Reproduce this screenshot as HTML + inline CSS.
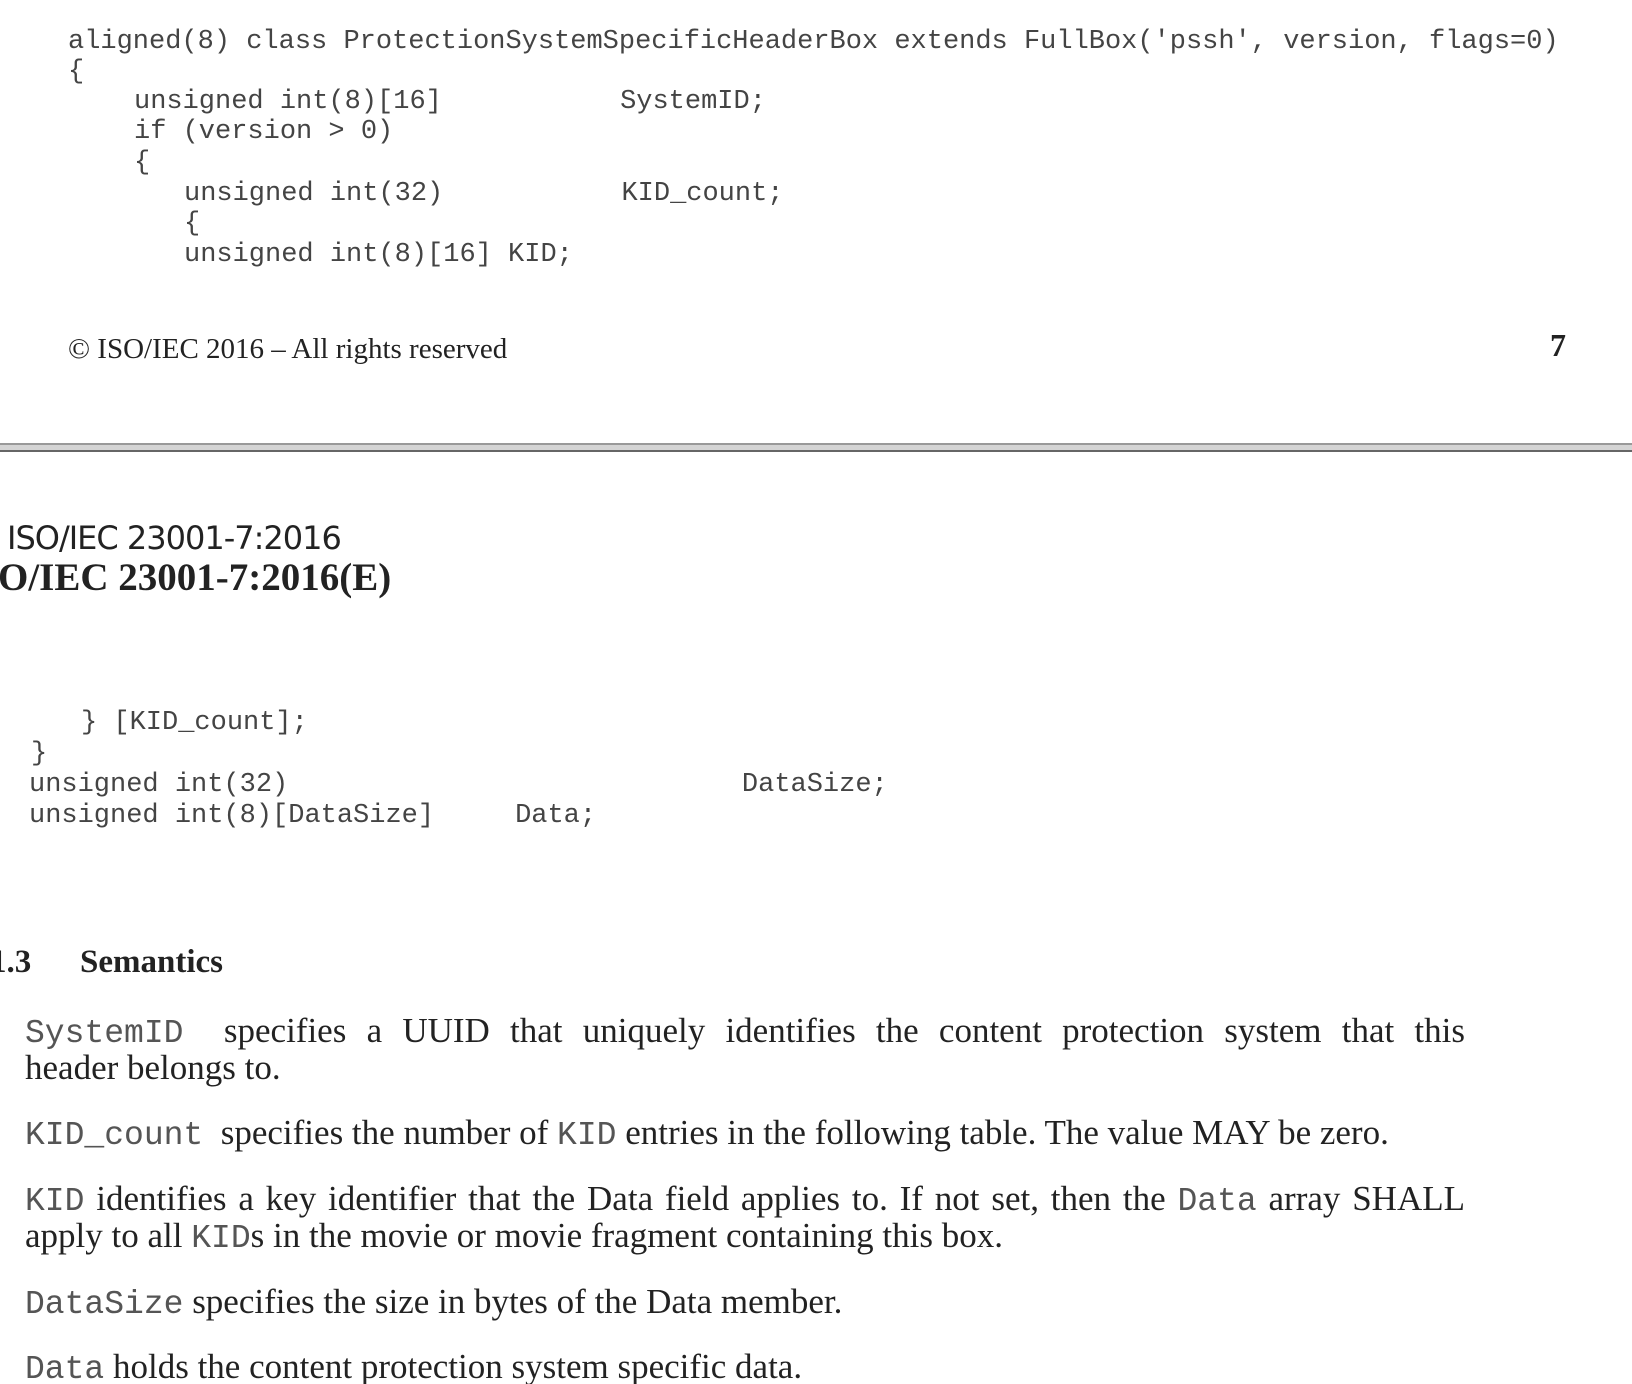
<!DOCTYPE html>
<html><head><meta charset="utf-8"><style>
html,body{margin:0;padding:0;background:#fff;width:1632px;height:1384px;overflow:hidden;position:relative}
.c{position:absolute;font-family:"Liberation Mono",monospace;font-size:27px;color:#444;white-space:pre;line-height:30px}
.s{position:absolute;font-family:"Liberation Serif",serif;font-size:35px;color:#222;white-space:nowrap;line-height:38px}
.m{font-family:"Liberation Mono",monospace;font-size:33px;color:#555}
.j{white-space:normal;text-align:justify;text-align-last:justify;width:1440px}
</style></head><body>
<div class="c" style="left:68px;top:27px">aligned(8) class ProtectionSystemSpecificHeaderBox extends FullBox('pssh', version, flags=0)</div>
<div class="c" style="left:68px;top:57px">{</div>
<div class="c" style="left:134px;top:87px">unsigned int(8)[16]           SystemID;</div>
<div class="c" style="left:134px;top:117px">if (version &gt; 0)</div>
<div class="c" style="left:134px;top:148px">{</div>
<div class="c" style="left:184px;top:179px">unsigned int(32)           KID_count;</div>
<div class="c" style="left:184px;top:209px">{</div>
<div class="c" style="left:184px;top:240px">unsigned int(8)[16] KID;</div>
<div class="s" style="left:68px;top:330px;font-size:29px">© ISO/IEC 2016 – All rights reserved</div>
<div class="s" style="left:1550px;top:326px;font-size:32px;font-weight:bold">7</div>
<div style="position:absolute;left:0;top:443px;width:1632px;height:9px;background:#d4d4d4;border-top:2px solid #999;border-bottom:2px solid #666;box-sizing:border-box"></div>
<div style="position:absolute;left:7px;top:519px;font-family:'DejaVu Sans','Liberation Sans',sans-serif;font-size:32px;color:#222;letter-spacing:-1px">ISO/IEC 23001-7:2016</div>
<div style="position:absolute;left:-2px;top:555px;font-family:'Liberation Serif',serif;font-size:39px;font-weight:bold;color:#222">O/IEC 23001-7:2016(E)</div>
<div class="c" style="left:81px;top:708px">} [KID_count];</div>
<div class="c" style="left:31px;top:739px">}</div>
<div class="c" style="left:29px;top:770px">unsigned int(32)                            DataSize;</div>
<div class="c" style="left:29px;top:801px">unsigned int(8)[DataSize]     Data;</div>
<div class="s" style="left:-10px;top:943px;font-weight:bold;font-size:33px">1.3</div>
<div class="s" style="left:80px;top:943px;font-weight:bold;font-size:33px">Semantics</div>
<div class="s j" style="left:25px;top:1012px;width:1440px"><span class="m">SystemID</span>&nbsp; specifies a UUID that uniquely identifies the content protection system that this</div>
<div class="s" style="left:25px;top:1049px">header belongs to.</div>
<div class="s" style="left:25px;top:1114px"><span class="m">KID_count</span>&nbsp; specifies the number of <span class="m">KID</span> entries in the following table. The value MAY be zero.</div>
<div class="s j" style="left:25px;top:1180px;width:1440px"><span class="m">KID</span> identifies a key identifier that the Data field applies to. If not set, then the <span class="m">Data</span> array SHALL</div>
<div class="s" style="left:25px;top:1217px">apply to all <span class="m">KID</span>s in the movie or movie fragment containing this box.</div>
<div class="s" style="left:25px;top:1283px"><span class="m">DataSize</span> specifies the size in bytes of the Data member.</div>
<div class="s" style="left:25px;top:1348px"><span class="m">Data</span> holds the content protection system specific data.</div>
</body></html>
